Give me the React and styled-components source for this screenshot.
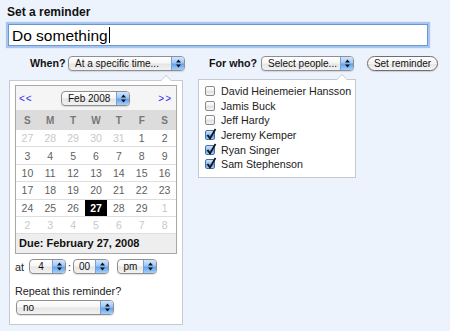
import React from 'react';
import styled, { createGlobalStyle } from 'styled-components';

const GlobalStyle = createGlobalStyle`
  html, body { margin: 0; padding: 0; background: #edf3fc; }
  body { font-family: "Liberation Sans", Arial, sans-serif; color: #111; }
  * { box-sizing: border-box; }
`;

const Page = styled.div`
  width: 450px;
  height: 331px;
  padding: 5px 0 0 7px;
  overflow: hidden;
`;

const Title = styled.div`
  font-weight: bold;
  font-size: 12px;
  line-height: 14px;
  color: #111;
`;

const TextField = styled.div`
  margin: 5px 0 0 1px;
  width: 420px;
  height: 22px;
  background: #fff;
  border: 1px solid #6d95d3;
  box-shadow: 0 0 1px 2px #a6c6ef;
  display: flex;
  align-items: center;
  padding-left: 3px;
  font-size: 15.5px;
  line-height: 19px;
  color: #000;
`;

const Caret = styled.span`
  display: inline-block;
  width: 1px;
  height: 16px;
  background: #000;
  margin-left: 1px;
`;

const Controls = styled.div`
  display: flex;
  align-items: center;
  height: 16px;
  margin: 9px 0 0 23px;
`;

const Label = styled.span`
  flex: none;
  width: ${(p) => p.$w}px;
  margin-left: ${(p) => p.$ml || 0}px;
  font-weight: bold;
  font-size: 10.7px;
  color: #111;
  white-space: nowrap;
`;

const SelectBox = styled.div`
  flex: none;
  display: flex;
  width: ${(p) => p.$w}px;
  height: 15px;
  margin-left: ${(p) => p.$ml || 0}px;
  margin-top: ${(p) => p.$mt || 0}px;
  border: 1px solid #8f8f8f;
  border-radius: 4px;
  overflow: hidden;
  background: linear-gradient(#ffffff, #f6f6f6 45%, #e6e6e6 55%, #f2f2f2);
  box-shadow: 0 1px 1px rgba(0, 0, 0, 0.12);
  font-size: 10px;
  line-height: 13px;
  color: #111;
`;

const SelectValue = styled.span`
  flex: 1;
  padding-left: ${(p) => (p.$center ? 0 : 6)}px;
  text-align: ${(p) => (p.$center ? 'center' : 'left')};
  white-space: nowrap;
  overflow: hidden;
`;

const SelectArrow = styled.span`
  flex: none;
  width: 13px;
  border-left: 1px solid #7f9ecb;
  background: linear-gradient(#d0e6fd, #9cc7f7 45%, #64a2ee 55%, #a2d1fb);
  display: flex;
  align-items: center;
  justify-content: center;
`;

function Select({ w, ml, mt, center, children }) {
  return (
    <SelectBox $w={w} $ml={ml} $mt={mt}>
      <SelectValue $center={center}>{children}</SelectValue>
      <SelectArrow>
        <svg width="5" height="9" viewBox="0 0 5 9">
          <path d="M2.5 0.5 L5 3.5 H0 Z M0 5.5 H5 L2.5 8.5 Z" fill="#111" />
        </svg>
      </SelectArrow>
    </SelectBox>
  );
}

const Button = styled.button`
  flex: none;
  margin-left: 13px;
  width: 71px;
  height: 15px;
  padding: 0;
  border: 1px solid #6e6e6e;
  border-radius: 8px;
  background: linear-gradient(#ffffff, #f4f4f4 50%, #e4e4e4 51%, #f6f6f6);
  box-shadow: 0 1px 1px rgba(0, 0, 0, 0.15);
  font-family: inherit;
  font-size: 10px;
  line-height: 13px;
  color: #111;
`;

const Panels = styled.div`
  display: flex;
  align-items: flex-start;
  margin: 9px 0 0 2px;
`;

const Popup = styled.div`
  position: relative;
  flex: none;
  width: ${(p) => p.$w}px;
  margin-left: ${(p) => p.$ml || 0}px;
  margin-top: ${(p) => p.$mt || 0}px;
  padding: ${(p) => p.$pad};
  background: #fff;
  border: 1px solid #c6cad0;
`;

const Pointer = styled.span`
  position: absolute;
  top: -6px;
  left: ${(p) => p.$x}px;
  width: 0;
  height: 0;
  border-left: 6px solid transparent;
  border-right: 6px solid transparent;
  border-bottom: 6px solid #c6cad0;
  &::after {
    content: '';
    position: absolute;
    left: -5px;
    top: 1px;
    border-left: 5px solid transparent;
    border-right: 5px solid transparent;
    border-bottom: 5px solid #fff;
  }
`;

const Calendar = styled.div`
  border: 1px solid #a8a8a8;
  background: #fff;
`;

const CalNav = styled.div`
  display: grid;
  grid-template-columns: 1fr auto 1fr;
  align-items: center;
  height: 24px;
  padding: 0 4px 0 3px;
  background: #f5f5f5;
`;

const NavLink = styled.span`
  justify-self: ${(p) => (p.$end ? 'end' : 'start')};
  color: #2b2bf0;
  font-size: 10px;
  letter-spacing: 1px;
`;

const DayGrid = styled.div`
  display: grid;
  grid-template-columns: repeat(7, 1fr);
`;

const DayHead = styled.div`
  height: 20px;
  background: #dcdcdc;
  font-weight: bold;
  font-size: 10px;
  color: #777;
  display: flex;
  align-items: center;
  justify-content: center;
`;

const DayCell = styled.div`
  height: 17.4px;
  border-bottom: 1px solid #dedede;
  display: flex;
  align-items: center;
  justify-content: center;
  font-size: 10.5px;
  font-weight: ${(p) => (p.$sel ? 'bold' : 'normal')};
  color: ${(p) => (p.$sel ? '#fff' : p.$muted ? '#c8c8c8' : '#5f5f5f')};
  background: ${(p) => (p.$sel ? '#000' : '#fff')};
`;

const Due = styled.div`
  height: 19px;
  line-height: 19px;
  padding-left: 3px;
  background: #eeeeee;
  font-weight: bold;
  font-size: 11px;
  color: #111;
`;

const TimeRow = styled.div`
  display: flex;
  align-items: center;
  height: 15px;
  margin-top: 5px;
  font-size: 10.8px;
  color: #222;
`;

const Colon = styled.span`
  flex: none;
  width: 3px;
  margin: 0 2px;
  text-align: center;
`;

const RepeatLabel = styled.div`
  margin-top: 11px;
  font-size: 10.8px;
  line-height: 13px;
  color: #222;
`;

const PeopleList = styled.ul`
  list-style: none;
  margin: 0;
  padding: 4px 0 5px 6px;
`;

const Person = styled.li`
  display: flex;
  align-items: center;
  height: 14.6px;
  font-size: 10.7px;
  color: #222;
  white-space: nowrap;
`;

const CheckBox = styled.span`
  position: relative;
  flex: none;
  width: 10px;
  height: 10px;
  margin-right: 6px;
  border: 1px solid ${(p) => (p.$on ? '#4a6fa5' : '#8a8a8a')};
  border-radius: 2px;
  background: ${(p) =>
    p.$on
      ? 'linear-gradient(#cfe4fc, #8ebdf3 50%, #5e9ce9 55%, #9fd0fb)'
      : 'linear-gradient(#ffffff, #eeeeee 50%, #e0e0e0 55%, #f3f3f3)'};
  & > svg {
    position: absolute;
    left: 0;
    top: -3px;
  }
`;

const weeks = [
  [[27, 1], [28, 1], [29, 1], [30, 1], [31, 1], [1], [2]],
  [[3], [4], [5], [6], [7], [8], [9]],
  [[10], [11], [12], [13], [14], [15], [16]],
  [[17], [18], [19], [20], [21], [22], [23]],
  [[24], [25], [26], [27, 0, 1], [28], [29], [1, 1]],
  [[2, 1], [3, 1], [4, 1], [5, 1], [6, 1], [7, 1], [8, 1]],
];

const people = [
  ['David Heinemeier Hansson', false],
  ['Jamis Buck', false],
  ['Jeff Hardy', false],
  ['Jeremy Kemper', true],
  ['Ryan Singer', true],
  ['Sam Stephenson', true],
];

export default function App() {
  return (
    <>
      <GlobalStyle />
      <Page>
        <Title>Set a reminder</Title>
        <TextField>
          <span>Do something</span>
          <Caret />
        </TextField>
        <Controls>
          <Label $w={38}>When?</Label>
          <Select w={117}>At a specific time...</Select>
          <Label $w={52} $ml={24}>For who?</Label>
          <Select w={93}>Select people...</Select>
          <Button>Set reminder</Button>
        </Controls>
        <Panels>
          <Popup $w={174} $pad="4px 5px 9px 5px">
            <Pointer $x={150} />
            <Calendar>
              <CalNav>
                <NavLink>&lt;&lt;</NavLink>
                <Select w={69}>Feb 2008</Select>
                <NavLink $end>&gt;&gt;</NavLink>
              </CalNav>
              <DayGrid>
                {['S', 'M', 'T', 'W', 'T', 'F', 'S'].map((d, i) => (
                  <DayHead key={i}>{d}</DayHead>
                ))}
                {weeks.flat().map(([n, muted, sel], i) => (
                  <DayCell key={i} $muted={!!muted} $sel={!!sel}>
                    {n}
                  </DayCell>
                ))}
              </DayGrid>
              <Due>Due: February 27, 2008</Due>
            </Calendar>
            <TimeRow>
              at
              <Select w={37} ml={5} center>4</Select>
              <Colon>:</Colon>
              <Select w={36} center>00</Select>
              <Select w={40} ml={8} center>pm</Select>
            </TimeRow>
            <RepeatLabel>Repeat this reminder?</RepeatLabel>
            <Select w={98} ml={1} mt={2}>no</Select>
          </Popup>
          <Popup $w={158} $ml={15} $mt={-1} $pad="0">
            <Pointer $x={137} />
            <PeopleList>
              {people.map(([name, on]) => (
                <Person key={name}>
                  <CheckBox $on={on}>
                    {on && (
                      <svg width="11" height="12" viewBox="0 0 11 12">
                        <path d="M1.5 7 L4 10.5 L9.5 1" fill="none" stroke="#111" strokeWidth="1.7" />
                      </svg>
                    )}
                  </CheckBox>
                  {name}
                </Person>
              ))}
            </PeopleList>
          </Popup>
        </Panels>
      </Page>
    </>
  );
}
